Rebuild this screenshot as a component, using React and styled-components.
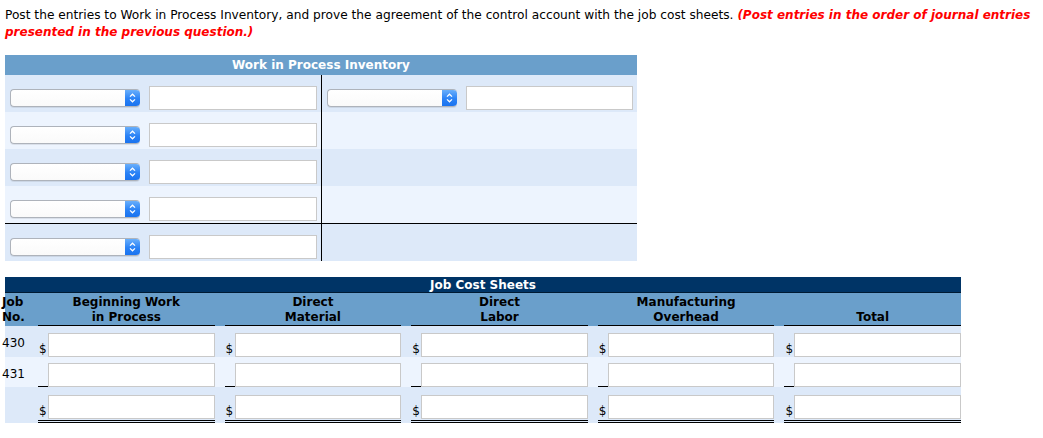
import React from "react";
import styled, { createGlobalStyle } from "styled-components";

const Global = createGlobalStyle`
  html, body { margin: 0; padding: 0; background: #fff; }
  body { font-family: "DejaVu Sans", Verdana, sans-serif; color: #000; }
  * { box-sizing: border-box; }
`;

const Page = styled.div`
  padding: 7px 5px 0 5px;
  width: 1043px;
`;

const Prompt = styled.p`
  margin: 0;
  font-size: 12.2px;
  line-height: 17px;
  width: 1033px;
`;

const Note = styled.span`
  color: #ff0000;
  font-weight: bold;
  font-style: italic;
  font-size: 12px;
`;

const Wip = styled.div`
  margin-top: 14px;
  width: 632px;
`;

const WipHeader = styled.div`
  height: 20px;
  background: #6a9fcb;
  color: #fff;
  font-weight: bold;
  font-size: 12px;
  line-height: 20px;
  text-align: center;
`;

const WipRow = styled.div`
  display: grid;
  grid-template-columns: 316px 316px;
  height: ${(p) => (p.$top ? 38 : 37)}px;
  background: ${(p) => (p.$dark ? "#dde9f9" : "#edf4fe")};
  border-top: ${(p) => (p.$top ? "1px solid #000" : "none")};
`;

const WipCell = styled.div`
  display: flex;
  align-items: flex-end;
  gap: 9px;
  padding: 0 0 2px 5px;
  border-left: ${(p) => (p.$divider ? "1px solid #000" : "none")};
`;

const SelectBox = styled.div`
  width: 130px;
  height: 18px;
  margin-bottom: 3px;
  display: flex;
  border-radius: 4px;
  border: 1px solid #aeb3bb;
  border-right: none;
  background: linear-gradient(#fff, #fafafa);
  box-shadow: 0 1px 0 rgba(0, 0, 0, 0.08);
  overflow: hidden;
`;

const SelectFace = styled.div`
  flex: 1;
`;

const SelectArrow = styled.div`
  width: 15px;
  height: 18px;
  margin-top: -1px;
  background: linear-gradient(#70b4fc, #2a82f6 55%, #1871ee);
  border-radius: 0 4px 4px 0;
  display: flex;
  align-items: center;
  justify-content: center;
`;

const TextInput = styled.input`
  width: ${(p) => p.$w || 168}px;
  height: 24px;
  border: 1px solid #c9c9c9;
  background: #fff;
  padding: 0 4px;
  font: inherit;
  font-size: 12px;
  outline: none;
  margin: 0;
  flex: none;
`;

const Chevrons = () => (
  <svg width="7" height="10" viewBox="0 0 7 10" fill="none">
    <path d="M1 3.6 L3.5 1.2 L6 3.6" stroke="#fff" strokeWidth="1.3" />
    <path d="M1 6.4 L3.5 8.8 L6 6.4" stroke="#fff" strokeWidth="1.3" />
  </svg>
);

const Select = () => (
  <SelectBox>
    <SelectFace />
    <SelectArrow>
      <Chevrons />
    </SelectArrow>
  </SelectBox>
);

const Sheets = styled.div`
  margin-top: 16px;
  width: 956px;
`;

const SheetsTitle = styled.div`
  height: 16px;
  background: #003466;
  color: #fff;
  font-weight: bold;
  font-size: 12px;
  line-height: 16px;
  text-align: center;
  border-bottom: 1px solid #001a33;
`;

const Grid = styled.div`
  display: grid;
  grid-template-columns: 33px repeat(4, 1fr 10px) 1fr;
`;

const HeadCell = styled.div`
  background: #6a9fcb;
  height: 33px;
  display: flex;
  flex-direction: column;
  justify-content: flex-end;
  align-items: ${(p) => (p.$left ? "flex-start" : "center")};
  font-weight: bold;
  font-size: 12px;
  line-height: 15px;
  padding-bottom: 0;
  text-indent: ${(p) => (p.$left ? "-3px" : "0")};
  border-bottom: ${(p) => (p.$line ? "1px solid #000" : "1px solid #6a9fcb")};
`;

const BodyCell = styled.div`
  background: ${(p) => (p.$dark ? "#dde9f9" : "#edf4fe")};
  height: ${(p) => p.$h}px;
`;

const JobCell = styled(BodyCell)`
  font-size: 12px;
  padding-top: ${(p) => p.$pt}px;
  text-indent: -3px;
`;

const ValueCell = styled(BodyCell)`
  display: flex;
  align-items: flex-end;
  padding-top: ${(p) => p.$pt}px;
`;

const Entry = styled.div`
  display: flex;
  align-items: flex-end;
  width: 100%;
  border-bottom: ${(p) => (p.$double ? "3px double #000" : "none")};
  padding-bottom: ${(p) => (p.$double ? 1 : 0)}px;
`;

const Dollar = styled.span`
  width: 10px;
  flex: none;
  font-size: 12px;
  line-height: 14px;
  padding-left: 1px;
  border-bottom: ${(p) => (p.$under ? "1px solid #000" : "none")};
  height: ${(p) => (p.$under ? 1 : 14)}px;
  margin-bottom: ${(p) => (p.$under ? 0 : 1)}px;
`;

const FillInput = styled(TextInput)`
  width: auto;
  flex: 1;
  min-width: 0;
`;

const heads = [
  ["Beginning Work", "in Process"],
  ["Direct", "Material"],
  ["Direct", "Labor"],
  ["Manufacturing", "Overhead"],
  ["Total"],
];

const rows = [
  { job: "430", dark: true, h: 31, pt: 7, jpt: 10, mark: "$" },
  { job: "431", dark: false, h: 30, pt: 8, jpt: 10, mark: "_" },
  { job: "", dark: true, h: 36, pt: 8, jpt: 10, mark: "$", dbl: true },
];

export default function App() {
  return (
    <>
      <Global />
      <Page>
        <Prompt>
          Post the entries to Work in Process Inventory, and prove the agreement of the control
          account with the job cost sheets.{" "}
          <Note>(Post entries in the order of journal entries presented in the previous question.)</Note>
        </Prompt>

        <Wip>
          <WipHeader>Work in Process Inventory</WipHeader>
          {[0, 1, 2, 3, 4].map((i) => (
            <WipRow key={i} $dark={i % 2 === 0} $top={i === 4}>
              <WipCell>
                <Select />
                <TextInput />
              </WipCell>
              <WipCell $divider>
                {i === 0 && (
                  <>
                    <Select />
                    <TextInput $w={167} />
                  </>
                )}
              </WipCell>
            </WipRow>
          ))}
        </Wip>

        <Sheets>
          <SheetsTitle>Job Cost Sheets</SheetsTitle>
          <Grid>
            <HeadCell $left>
              <span>Job</span>
              <span>No.</span>
            </HeadCell>
            {heads.map((h, i) => (
              <React.Fragment key={i}>
                {i > 0 && <HeadCell />}
                <HeadCell $line>
                  {h.map((t) => (
                    <span key={t}>{t}</span>
                  ))}
                </HeadCell>
              </React.Fragment>
            ))}
            {rows.map((r, ri) => (
              <React.Fragment key={ri}>
                <JobCell $dark={r.dark} $h={r.h} $pt={r.jpt}>
                  {r.job}
                </JobCell>
                {heads.map((_, ci) => (
                  <React.Fragment key={ci}>
                    {ci > 0 && <BodyCell $dark={r.dark} $h={r.h} />}
                    <ValueCell $dark={r.dark} $h={r.h} $pt={r.pt}>
                      <Entry $double={r.dbl}>
                        {r.mark === "$" ? <Dollar>$</Dollar> : <Dollar $under />}
                        <FillInput />
                      </Entry>
                    </ValueCell>
                  </React.Fragment>
                ))}
              </React.Fragment>
            ))}
          </Grid>
        </Sheets>
      </Page>
    </>
  );
}
